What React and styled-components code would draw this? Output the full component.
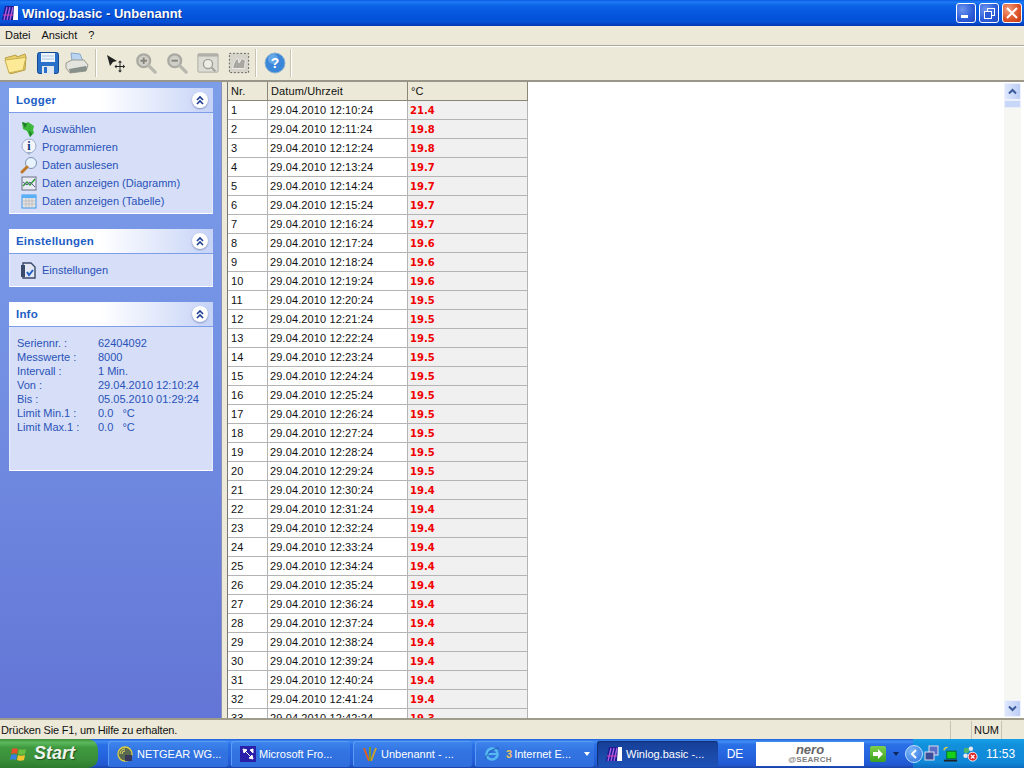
import React from 'react';
import styled, { createGlobalStyle } from 'styled-components';

const Global = createGlobalStyle`
html, body { margin:0; padding:0; background:#ece9d8; }
body { font-family:"Liberation Sans", Arial, sans-serif; font-size:11px; color:#111; }
`;

const Win = styled.div`
width:1024px;
height:768px;
display:flex;
flex-direction:column;
overflow:hidden;
`;

// title bar
const TitleBar = styled.div`
height:26px;
flex:none;
display:flex;
align-items:center;
padding:0 2px 0 2px;
background:linear-gradient(180deg,#0a5be0 0%,#1f7bf5 8%,#0b62e6 22%,#0554dc 60%,#0450d6 85%,#0335b0 100%);
`;
const TitleText = styled.div`
flex:1;
margin-left:3px;
color:#fff;
font:bold 13px "Liberation Sans", Arial, sans-serif;
letter-spacing:0.02px;
text-shadow:1px 1px 0 #0a2f90;
`;
const WinBtn = styled.div`
width:20px;
height:20px;
margin-left:3px;
border:1px solid #fff;
border-radius:3px;
box-sizing:border-box;
display:flex;
align-items:center;
justify-content:center;
background:${p => p.$close
    ? 'radial-gradient(circle at 30% 30%,#f0a080,#e0552a 55%,#c23a14)'
    : 'radial-gradient(circle at 30% 30%,#6d94ee,#2c5bd8 60%,#2247c0)'};
`;

// menu
const MenuBar = styled.div`
height:20px;
flex:none;
box-sizing:border-box;
padding:0 0 2px 5px;
display:flex;
align-items:center;
gap:11px;
background:#ece9d8;
border-bottom:1px solid #aca899;
`;
const MenuItem = styled.span`
font-size:11px;
letter-spacing:-0.05px;
color:#111;
`;

// toolbar
const ToolBar = styled.div`
flex:none;
box-sizing:content-box;
display:flex;
align-items:center;
padding:0 0 2px 3px;
height:31px;
background:#ece9d8;
border-top:1px solid #fff;
border-bottom:2px solid #9a968a;
`;
const Tool = styled.div`
width:24px;
height:24px;
margin-right:${p => p.$mr}px;
display:flex;
align-items:center;
justify-content:center;
flex:none;
`;
const ToolSep = styled.div`
width:1px;
height:28px;
margin:0 ${p => p.$mr}px 0 0;
background:#c8c4b4;
border-right:1px solid #fff;
flex:none;
`;

// main
const Main = styled.div`
flex:1;
min-height:0;
display:flex;
background:#ece9d8;
`;
const Side = styled.aside`
width:222px;
flex:none;
box-sizing:border-box;
padding:6px 9px 0;
display:flex;
flex-direction:column;
gap:15px;
background:linear-gradient(180deg,#7c9ee9 0%,#7390e3 45%,#6375d6 100%);
border-right:1px solid #8a90b8;
`;
const Panel = styled.section`
width:204px;
`;
const PanelHead = styled.div`
height:25px;
box-sizing:border-box;
display:flex;
align-items:center;
justify-content:space-between;
padding:0 5px 0 7px;
background:linear-gradient(90deg,#fff 0%,#fff 45%,#c6d3f7 100%);
border-bottom:1px solid #7c9ee9;
`;
const PanelTitle = styled.span`
font:bold 11.5px "Liberation Sans", Arial, sans-serif;
color:#215dc6;
letter-spacing:0.2px;
`;
const Chevron = styled.span`
width:16px;
height:16px;
border-radius:50%;
background:#fff;
box-shadow:0 1px 2px #8090c0;
display:flex;
align-items:center;
justify-content:center;
`;
const PanelBody = styled.div`
background:#d6dff7;
box-sizing:border-box;
height:${p => p.$h}px;
padding-top:${p => p.$top}px;
border-bottom:1px solid #fff;
border-left:1px solid #e6ebfa;
border-right:1px solid #e6ebfa;
`;
const Action = styled.div`
height:18px;
display:flex;
align-items:center;
gap:4px;
padding-left:9px;
color:#2a52b8;
font-size:11px;
`;
const ActionIcon = styled.span`
width:19px;
height:18px;
flex:none;
display:flex;
align-items:center;
justify-content:center;
`;
const InfoRow = styled.div`
height:14px;
line-height:14px;
display:flex;
color:#2a52b8;
font-size:11px;
padding-left:7px;
white-space:pre;
`;
const InfoLabel = styled.span`
width:81px;
flex:none;
`;

const Splitter = styled.div`
width:5px;
flex:none;
background:#ece9d8;
`;

// table
const Content = styled.div`
flex:1;
min-width:0;
height:637px;
display:flex;
background:#fff;
border-left:1px solid #777;
overflow:hidden;
`;
const TableWrap = styled.div`
flex:1;
overflow:hidden;
`;
const Row = styled.div`
display:grid;
grid-template-columns:40px 140px 120px;
width:300px;
height:19px;
box-sizing:border-box;
border-bottom:1px solid ${p => p.$head ? '#8a8778' : '#b4b4b4'};
background:${p => p.$head ? '#ece9d8' : '#fff'};
`;
const Cell = styled.div`
box-sizing:border-box;
padding-left:${p => p.$left || 2}px;
line-height:18px;
font-size:11px;
letter-spacing:0.12px;
color:#111;
border-right:1px solid ${p => p.$head ? '#8a8778' : '#b4b4b4'};
`;
const TempCell = styled(Cell)`
height:18px;
padding-top:1px;
background:#f0f0f0;
color:#f00000;
font:bold 10px "DejaVu Sans", Verdana, sans-serif;
line-height:17px;
letter-spacing:0;
`;

// scrollbar
const Scroll = styled.div`
width:17px;
margin:1px 3px 2px 0;
flex:none;
background:#f6f6f2;
display:flex;
flex-direction:column;
justify-content:space-between;
position:relative;
`;
const ScrollBtn = styled.div`
height:17px;
border-radius:2px;
background:linear-gradient(90deg,#dfe8fc,#bccdf6);
border:1px solid #eef2fd;
box-sizing:border-box;
display:flex;
align-items:center;
justify-content:center;
`;
const ScrollThumb = styled.div`
position:absolute;
top:17px;
left:0;
right:0;
height:8px;
background:#c8d6f8;
border:1px solid #e8eefc;
box-sizing:border-box;
`;

// status
const Status = styled.div`
height:19px;
flex:none;
display:flex;
align-items:center;
background:#ece9d8;
border-top:2px solid #a09c8c;
font-size:11px;
color:#111;
box-sizing:content-box;
`;
const StatusText = styled.div`
flex:1;
padding-left:1px;
letter-spacing:-0.18px;
`;
const StatusPane = styled.div`
width:${p => p.$w}px;
height:18px;
line-height:18px;
text-align:center;
border-left:1px solid #c8c4b4;
flex:none;
`;

// taskbar
const Taskbar = styled.div`
height:29px;
flex:none;
display:flex;
align-items:stretch;
background:linear-gradient(180deg,#1f5fd8 0%,#3f8cf3 8%,#2a6fe6 20%,#2463de 60%,#2158d0 90%,#1941a5 100%);
`;
const StartBtn = styled.div`
width:98px;
flex:none;
margin-right:10px;
display:flex;
align-items:center;
gap:6px;
padding-left:10px;
box-sizing:border-box;
border-radius:0 10px 10px 0;
background:linear-gradient(180deg,#3c8f3c 0%,#5cb85c 12%,#3f9a3f 30%,#3a8f3a 70%,#2c7a2c 100%);
color:#eef4ee;
font:italic bold 18px "Liberation Sans", Arial, sans-serif;
text-shadow:1px 1px 1px #1c4f1c;
`;
const TaskBtn = styled.div`
width:${p => p.$w}px;
flex:none;
margin:2px 3px 1px 0;
box-sizing:border-box;
padding-left:9px;
display:flex;
align-items:center;
gap:3px;
color:#fff;
font-size:11px;
white-space:nowrap;
border-radius:3px;
background:${p => p.$active
    ? 'linear-gradient(180deg,#163f96,#1e52b8)'
    : 'linear-gradient(180deg,#3f86ee,#3274e2 40%,#2f6ddc)'};
box-shadow:${p => p.$active ? 'inset 1px 1px 1px #123070' : 'inset 1px 1px 0 #5c9cf5'};
`;
const Count = styled.b`
color:#f0c060;
margin:0 2px 0 3px;
`;
const TaskMore = styled.span`
margin-left:auto;
margin-right:4px;
width:0;
height:0;
border:3px solid transparent;
border-top:4px solid #fff;
border-bottom:0;
`;
const Lang = styled.div`
width:32px;
flex:none;
color:#fff;
font-size:12px;
display:flex;
align-items:center;
justify-content:center;
margin:0 5px 0 -2px;
`;
const Nero = styled.div`
width:108px;
margin:3px 6px 2px 0;
flex:none;
background:#fff;
display:flex;
flex-direction:column;
align-items:center;
justify-content:center;
`;
const NeroName = styled.span`
font:italic bold 13px/10px "Liberation Sans", Arial, sans-serif;
color:#666;
`;
const NeroSub = styled.span`
font:bold 8px/9px "Liberation Sans", Arial, sans-serif;
letter-spacing:0.3px;
color:#808080;
`;
const Go = styled.div`
width:16px;
height:16px;
flex:none;
align-self:center;
margin-right:4px;
border-radius:2px;
background:linear-gradient(180deg,#7ed04a,#3ba01f);
display:flex;
align-items:center;
justify-content:center;
`;
const SmallArrow = styled.span`
align-self:center;
width:0;
height:0;
margin:0 8px 0 3px;
border:3px solid transparent;
border-top:4px solid #10275c;
border-bottom:0;
`;
const Tray = styled.div`
flex:1;
min-width:0;
display:flex;
align-items:center;
gap:3px;
margin-left:6px;
background:linear-gradient(180deg,#16a0e8,#1290dc 20%,#1088d8 80%,#0c6cc0);
color:#fff;
font-size:12px;
`;
const TrayBack = styled.span`
width:18px;
height:18px;
margin:0 -2px 0 -8px;
box-sizing:border-box;
flex:none;
border-radius:50%;
border:1px solid #bfe0ff;
background:radial-gradient(circle at 35% 30%,#7cb6f8,#2b6fe0);
display:flex;
align-items:center;
justify-content:center;
`;
const Clock = styled.span`
margin-left:5px;
white-space:nowrap;
`;

// icons
const FolderIcon = () => (
  <svg width="23" height="22" viewBox="0 0 23 22">
    <path d="M1 6l11-3 1 2 8-3 1 3-1 13-15 4z" fill="#eccf68" stroke="#b8a048" />
    <path d="M1 8l16-2 5-1-3 13-14 3z" fill="#fcea96" stroke="#c8b050" />
  </svg>
);
const SaveIcon = () => (
  <svg width="22" height="22" viewBox="0 0 22 22">
    <rect x=".5" y=".5" width="21" height="21" rx="2" fill="#2a6fc8" stroke="#164a90" />
    <rect x="4" y="1" width="14" height="9" fill="#eef4fb" />
    <path d="M5 4h12M5 7h12" stroke="#a8c4e4" />
    <rect x="5" y="14" width="12" height="8" fill="#dfe6ee" />
    <rect x="7" y="15" width="3" height="6" fill="#2a6fc8" />
  </svg>
);
const PrintIcon = () => (
  <svg width="24" height="22" viewBox="0 0 24 22">
    <path d="M6 1l9 1 3 7H7z" fill="#b8d4f0" stroke="#8aa8c8" />
    <path d="M1 11l6-3h12l4 5-2 6-16 2-4-5z" fill="#e4e4de" stroke="#9a9a90" />
    <path d="M4 17l17-3 1 2-1 3-16 2z" fill="#88908a" />
  </svg>
);
const CursorIcon = () => (
  <svg width="20" height="20" viewBox="0 0 20 20">
    <path d="M2 2l10 6-4 1-3 4z" fill="#222" />
    <path d="M15 9v9M10.5 13.500h9" stroke="#222" strokeWidth="1" />
    <path d="M15 7.500l-2 2h4zM15 19.500l-2-2h4zM9.500 13.500l2-2v4zM20 13.500l-2-2v4z" fill="#222" />
  </svg>
);
const ZoomIcon = ({ sign }) => (
  <svg width="22" height="22" viewBox="0 0 24 24">
    <circle cx="9.500" cy="9.500" r="7" fill="#d0d0c8" stroke="#aaaaa2" strokeWidth="2.500" />
    <path d="M15 15l7 7" stroke="#b8b8b0" strokeWidth="3.500" strokeLinecap="round" />
    <path d={sign === '+' ? 'M6 9.500h7M9.500 6v7' : 'M6 9.500h7'} stroke="#84847c" strokeWidth="2" />
  </svg>
);
const ZoomWinIcon = () => (
  <svg width="22" height="22" viewBox="0 0 24 24">
    <rect x="1" y="2" width="22" height="20" rx="1" fill="#dcdcd4" stroke="#a8a8a0" />
    <rect x="1" y="2" width="22" height="3" fill="#b0b0a8" />
    <circle cx="12" cy="13" r="5" fill="#ecece6" stroke="#a0a098" strokeWidth="1.500" />
    <path d="M16 17l4 4" stroke="#a0a098" strokeWidth="2" />
  </svg>
);
const DashedIcon = () => (
  <svg width="22" height="22" viewBox="0 0 24 24">
    <rect x="1.500" y="1.500" width="21" height="21" fill="#d6d4ca" stroke="#555" strokeDasharray="2 2" />
    <path d="M5 18c1-6 3-10 6-11l1 5 3-5 4 2-1 9H5z" fill="#a8a8a0" stroke="#eee" />
  </svg>
);
const HelpIcon = () => (
  <svg width="22" height="22" viewBox="0 0 22 22">
    <circle cx="11" cy="11" r="10" fill="#3a86d8" stroke="#8ab0d0" />
    <circle cx="9" cy="7" r="5" fill="#78b4ee" opacity=".7" />
    <text x="11" y="16" textAnchor="middle" fontFamily="Liberation Sans" fontWeight="bold" fontSize="14" fill="#fff">?</text>
  </svg>
);
const WinlogIcon = () => (
  <svg width="17" height="16" viewBox="0 0 17 16" style={{ flex: 'none' }}>
    <path d="M3 1h9v14H0z" fill="#1a1a90" />
    <path d="M12 1h4v14h-5z" fill="#fff" />
    <path d="M2 15L5 2M5 15L8 2M8 15l3-13" stroke="#b060e8" strokeWidth="1.300" fill="none" />
    <path d="M1 10h10" stroke="#e040b0" />
  </svg>
);
const ChevronIcon = () => (
  <svg width="10" height="10" viewBox="0 0 10 10" fill="none" stroke="#1c3f94" strokeWidth="1.600">
    <path d="M2 5l3-3 3 3M2 9l3-3 3 3" />
  </svg>
);
const PickIcon = () => (
  <svg width="15" height="17" viewBox="0 0 15 17">
    <path d="M1 1l4 1 2-1 6 4-1 4 1 3-4 4-3-6-4-2z" fill="#3cb83a" />
    <path d="M1 1l5 2-2 4zM8 9l3 4-2 3z" fill="#1d7a2a" />
  </svg>
);
const InfoIcon = () => (
  <svg width="18" height="18" viewBox="0 0 18 18">
    <circle cx="9" cy="8" r="7" fill="#f4f6fc" stroke="#9aaccc" />
    <path d="M6 14l3 3 3-3z" fill="#a0aecc" />
    <text x="9" y="12" textAnchor="middle" fontFamily="Liberation Serif" fontWeight="bold" fontSize="12" fill="#14307c">i</text>
  </svg>
);
const FindIcon = () => (
  <svg width="18" height="18" viewBox="0 0 18 18">
    <circle cx="11" cy="7" r="5.500" fill="#e8f2fc" stroke="#7a92b4" />
    <path d="M7 11l-5 5" stroke="#c07828" strokeWidth="3" strokeLinecap="round" />
  </svg>
);
const ChartIcon = () => (
  <svg width="16" height="15" viewBox="0 0 16 15">
    <rect x="1" y="1" width="14" height="13" fill="#e8eaf4" stroke="#6a7088" />
    <path d="M2 10l4-4 3 3 5-6" fill="none" stroke="#2c9a30" strokeWidth="1.400" />
    <path d="M2 6l4 3 3-3 5 5" fill="none" stroke="#5a5a90" />
  </svg>
);
const GridIcon = () => (
  <svg width="16" height="15" viewBox="0 0 16 15">
    <rect x="1" y="1" width="14" height="13" fill="#e4e4e4" stroke="#3a98ee" />
    <rect x="1" y="1" width="14" height="3" fill="#5ab0f8" />
    <path d="M5 4v10M8 4v10M11 4v10M1 7h14M1 10h14" stroke="#b4b4b4" strokeWidth=".700" />
  </svg>
);
const SetupIcon = () => (
  <svg width="17" height="17" viewBox="0 0 17 17">
    <path d="M3 1h8l4 4v11H3z" fill="#e4e8f4" stroke="#3a4a6a" strokeWidth="1.400" />
    <path d="M1 3h4v12H1z" fill="#3a4a6a" />
    <path d="M7 10l2 3 4-5" fill="none" stroke="#2060c8" strokeWidth="2" />
  </svg>
);
const ArrowIcon = ({ up }) => (
  <svg width="9" height="7" viewBox="0 0 9 7" fill="none" stroke="#3a5a9c" strokeWidth="2">
    <path d={up ? 'M1 5.500l3.500-3.500L8 5.500' : 'M1 1.500l3.500 3.500L8 1.500'} />
  </svg>
);
const FlagIcon = () => (
  <svg width="18" height="18" viewBox="0 0 18 18">
    <path d="M2 4c2-1 4-1 6 0l-1 5c-2-1-4-1-6 0z" fill="#e8502a" />
    <path d="M9 4c2 1 4 1 7 0l-1 5c-2 1-5 1-7 0z" fill="#6cc040" />
    <path d="M1 10c2-1 4-1 6 0l-1 5c-2-1-4-1-6 0z" fill="#3a80e0" />
    <path d="M8 10c2 1 4 1 7 0l-1 5c-2 1-5 1-7 0z" fill="#f4c430" />
  </svg>
);
const NetgearIcon = () => (
  <svg width="17" height="17" viewBox="0 0 17 17" style={{ flex: 'none' }}>
    <circle cx="8" cy="8" r="7" fill="#5a6a50" stroke="#e0d040" strokeWidth="1.300" />
    <path d="M3 8a5 5 0 0 1 5-5M5 8a3 3 0 0 1 3-3" fill="none" stroke="#e8e060" />
    <rect x="8" y="9" width="7" height="6" fill="#3a3a58" />
  </svg>
);
const FrontIcon = () => (
  <svg width="16" height="16" viewBox="0 0 16 16" style={{ flex: 'none' }}>
    <rect width="16" height="16" fill="#2a1fa8" />
    <path d="M3 3l4 1-3 3zM13 13l-4-1 3-3zM5 5l6 6M13 3v4l-3-3z" fill="#fff" stroke="#fff" />
  </svg>
);
const PaintIcon = () => (
  <svg width="16" height="17" viewBox="0 0 16 17" fill="none" strokeWidth="2" style={{ flex: 'none' }}>
    <path d="M2 2l5 13" stroke="#e06020" />
    <path d="M14 2l-5 13" stroke="#c8a030" />
    <path d="M8 1v14" stroke="#7a9a30" />
  </svg>
);
const IeIcon = () => (
  <svg width="16" height="16" viewBox="0 0 16 16" style={{ flex: 'none' }}>
    <circle cx="8" cy="8" r="5.500" fill="none" stroke="#56b8f0" strokeWidth="2.600" />
    <path d="M3 8h10" stroke="#56b8f0" strokeWidth="2" />
    <path d="M1 13C3 8 9 2 15 2" stroke="#1c5fa8" fill="none" />
  </svg>
);
const NetIcon = () => (
  <svg width="15" height="17" viewBox="0 0 15 17" style={{ flex: 'none' }}>
    <rect x="5" y="1" width="9" height="9" fill="#5a70c8" stroke="#dde" />
    <rect x="1" y="7" width="9" height="8" fill="#3a4c98" stroke="#dde" />
  </svg>
);
const WifiIcon = () => (
  <svg width="17" height="18" viewBox="0 0 18 18" style={{ flex: 'none' }}>
    <rect x="5" y="6" width="10" height="8" fill="#18d018" stroke="#063" />
    <path d="M2 15h14v2H2z" fill="#222" />
    <path d="M2 5a4 4 0 0 1 4-3" stroke="#e8d040" fill="none" strokeWidth="1.500" />
  </svg>
);
const AlertIcon = () => (
  <svg width="16" height="18" viewBox="0 0 18 18" style={{ flex: 'none' }}>
    <circle cx="5" cy="5" r="3" fill="#4ab868" />
    <circle cx="10" cy="3" r="2.500" fill="#e8e8f0" />
    <circle cx="4" cy="11" r="2.500" fill="#e8e8f0" />
    <circle cx="12" cy="12" r="5" fill="#e02828" stroke="#fff" />
    <path d="M10 10l4 4M14 10l-4 4" stroke="#fff" strokeWidth="1.400" />
  </svg>
);

const actions = [
  [PickIcon, 'Auswählen'],
  [InfoIcon, 'Programmieren'],
  [FindIcon, 'Daten auslesen'],
  [ChartIcon, 'Daten anzeigen (Diagramm)'],
  [GridIcon, 'Daten anzeigen (Tabelle)'],
];

const info = [
  ['Seriennr. :', '62404092'],
  ['Messwerte :', '8000'],
  ['Intervall :', '1 Min.'],
  ['Von :', '29.04.2010 12:10:24'],
  ['Bis :', '05.05.2010 01:29:24'],
  ['Limit Min.1 :', '0.0   °C'],
  ['Limit Max.1 :', '0.0   °C'],
];

const temps = ['21.4', '19.8', '19.8', '19.7', '19.7', '19.7', '19.7', '19.6', '19.6', '19.6',
  ...Array(10).fill('19.5'), ...Array(12).fill('19.4'), '19.3'];

function Head({ title }) {
  return (
    <PanelHead>
      <PanelTitle>{title}</PanelTitle>
      <Chevron><ChevronIcon /></Chevron>
    </PanelHead>
  );
}

export default function App() {
  return (
    <Win>
      <Global />
      <TitleBar>
        <WinlogIcon />
        <TitleText>Winlog.basic - Unbenannt</TitleText>
        <WinBtn>
          <svg width="12" height="12" viewBox="0 0 12 12"><rect x="1" y="8" width="7" height="3" fill="#fff" /></svg>
        </WinBtn>
        <WinBtn>
          <svg width="13" height="13" viewBox="0 0 13 13" fill="none" stroke="#fff">
            <rect x="4.500" y="1.500" width="7" height="7" />
            <rect x="1.500" y="4.500" width="7" height="7" fill="#2c5bd8" />
          </svg>
        </WinBtn>
        <WinBtn $close>
          <svg width="12" height="12" viewBox="0 0 12 12" stroke="#fff" strokeWidth="2"><path d="M1 1l10 10M11 1L1 11" /></svg>
        </WinBtn>
      </TitleBar>

      <MenuBar>
        <MenuItem>Datei</MenuItem>
        <MenuItem>Ansicht</MenuItem>
        <MenuItem>?</MenuItem>
      </MenuBar>

      <ToolBar>
        <Tool $mr={9}><FolderIcon /></Tool>
        <Tool $mr={5}><SaveIcon /></Tool>
        <Tool $mr={6}><PrintIcon /></Tool>
        <ToolSep $mr={6} />
        <Tool $mr={7}><CursorIcon /></Tool>
        <Tool $mr={7}><ZoomIcon sign="+" /></Tool>
        <Tool $mr={7}><ZoomIcon sign="-" /></Tool>
        <Tool $mr={7}><ZoomWinIcon /></Tool>
        <Tool $mr={4}><DashedIcon /></Tool>
        <ToolSep $mr={6} />
        <Tool $mr={3}><HelpIcon /></Tool>
        <ToolSep $mr={0} />
      </ToolBar>

      <Main>
        <Side>
          <Panel>
            <Head title="Logger" />
            <PanelBody $h={101} $top={7}>
              {actions.map(([Icon, label]) => (
                <Action key={label}>
                  <ActionIcon><Icon /></ActionIcon>
                  {label}
                </Action>
              ))}
            </PanelBody>
          </Panel>
          <Panel>
            <Head title="Einstellungen" />
            <PanelBody $h={33} $top={7}>
              <Action>
                <ActionIcon><SetupIcon /></ActionIcon>
                Einstellungen
              </Action>
            </PanelBody>
          </Panel>
          <Panel>
            <Head title="Info" />
            <PanelBody $h={144} $top={9}>
              {info.map(([k, v]) => (
                <InfoRow key={k}>
                  <InfoLabel>{k}</InfoLabel>
                  <span>{v}</span>
                </InfoRow>
              ))}
            </PanelBody>
          </Panel>
        </Side>
        <Splitter />
        <Content>
          <TableWrap>
            <Row $head>
              <Cell $head $left={3}>Nr.</Cell>
              <Cell $head $left={3}>Datum/Uhrzeit</Cell>
              <Cell $head $left={3}>°C</Cell>
            </Row>
            {temps.map((t, i) => {
              const m = String(10 + i).padStart(2, '0');
              return (
                <Row key={i}>
                  <Cell $left={3}>{i + 1}</Cell>
                  <Cell>29.04.2010 12:{m}:24</Cell>
                  <TempCell>{t}</TempCell>
                </Row>
              );
            })}
          </TableWrap>
          <Scroll>
            <ScrollBtn><ArrowIcon up /></ScrollBtn>
            <ScrollThumb />
            <ScrollBtn><ArrowIcon /></ScrollBtn>
          </Scroll>
        </Content>
      </Main>

      <Status>
        <StatusText>Drücken Sie F1, um Hilfe zu erhalten.</StatusText>
        <StatusPane $w={20} />
        <StatusPane $w={29}>NUM</StatusPane>
        <StatusPane $w={22} />
      </Status>

      <Taskbar>
        <StartBtn><FlagIcon />Start</StartBtn>
        <TaskBtn $w={120}><NetgearIcon />NETGEAR WG...</TaskBtn>
        <TaskBtn $w={119}><FrontIcon />Microsoft Fro...</TaskBtn>
        <TaskBtn $w={119}><PaintIcon />Unbenannt - ...</TaskBtn>
        <TaskBtn $w={119}><IeIcon /><span><Count>3</Count>Internet E...</span><TaskMore /></TaskBtn>
        <TaskBtn $active $w={121}><WinlogIcon />Winlog.basic -...</TaskBtn>
        <Lang>DE</Lang>
        <Nero>
          <NeroName>nero</NeroName>
          <NeroSub>@SEARCH</NeroSub>
        </Nero>
        <Go>
          <svg width="12" height="12" viewBox="0 0 12 12"><path d="M1 4h5V1l5 5-5 5V8H1z" fill="#fff" /></svg>
        </Go>
        <SmallArrow />
        <Tray>
          <TrayBack>
            <svg width="8" height="10" viewBox="0 0 8 10" fill="none" stroke="#fff" strokeWidth="2"><path d="M6 1L2 5l4 4" /></svg>
          </TrayBack>
          <NetIcon />
          <WifiIcon />
          <AlertIcon />
          <Clock>11:53</Clock>
        </Tray>
      </Taskbar>
    </Win>
  );
}
